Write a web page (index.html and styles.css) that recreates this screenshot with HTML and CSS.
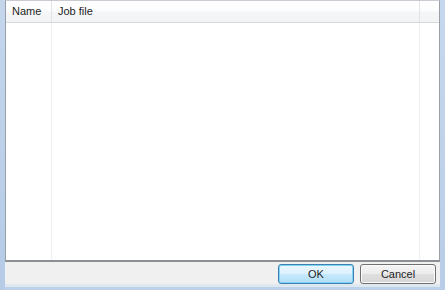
FILE: index.html
```html
<!DOCTYPE html>
<html>
<head><meta charset="utf-8"><link rel="stylesheet" href="styles.css"></head>
<body>
<div class="window">
  <div class="frame-left"></div>
  <div class="client">
    <div class="list">
      <div class="header">
        <div class="col col-name">Name</div>
        <div class="col col-job">Job file</div>
        <div class="col col-rest"></div>
      </div>
      <div class="rows">
        <div class="cell cell-name"></div>
        <div class="cell cell-job"></div>
        <div class="cell cell-rest"></div>
      </div>
    </div>
    <div class="buttons">
      <button class="btn btn-default">OK</button>
      <button class="btn">Cancel</button>
    </div>
  </div>
  <div class="frame-right"></div>
</div>
</body>
</html>
```
FILE: styles.css
```css
html, body { margin: 0; padding: 0; }
body {
  width: 445px; height: 290px; overflow: hidden;
  font-family: "Liberation Sans", Arial, sans-serif;
  font-size: 11px; color: #1e1e1e;
  background: #bcd2ea;
}
.window { display: flex; height: 290px; }
.frame-left { width: 5px; background: linear-gradient(#c3d6ec, #b5cbe6); }
.frame-right { width: 5px; background: linear-gradient(#c6d8ee, #b8cde7); }
.client {
  flex: 1; display: flex; flex-direction: column;
  background: #f0f0f0;
  border-bottom: 3px solid #dfe7f1;
  height: 287px;
  box-sizing: border-box;
}
.list {
  border: 1px solid #9a9ea5;
  border-top-color: #c8ccd2;
  border-bottom: 2px solid #8b8f94;
  background: #fff;
  display: flex; flex-direction: column;
  box-sizing: border-box;
  height: 262px;
}
.header {
  display: flex; height: 22px; box-sizing: border-box;
  background: linear-gradient(#ffffff 0%, #fdfdfe 45%, #f5f6f8 55%, #f2f3f5 100%);
  border-bottom: 1px solid #d8d9db;
}
.col {
  box-sizing: border-box; border-right: 1px solid #e3e4e6;
  padding-left: 6px; line-height: 21px;
}
.col-name { width: 46px; }
.col-job { width: 368px; }
.col-rest { flex: 1; border-right: none; }
.rows { flex: 1; display: flex; }
.cell { box-sizing: border-box; border-right: 1px solid #f0f0f0; }
.cell-name { width: 46px; }
.cell-job { width: 368px; }
.cell-rest { flex: 1; border-right: none; }
.buttons {
  flex: 1; display: flex; justify-content: flex-end; align-items: flex-start;
  gap: 6px; padding: 2px 4px 0 0;
}
.btn {
  width: 76px; height: 20px; box-sizing: border-box;
  font-family: "Liberation Sans", Arial, sans-serif; font-size: 11px; color: #1e1e1e;
  border: 1px solid #707070; border-radius: 3px;
  background: linear-gradient(#f4f4f4 0%, #ececec 50%, #e0e0e0 51%, #d6d6d6 100%);
  box-shadow: inset 0 0 0 1px #fbfbfb;
  padding: 0;
}
.btn-default {
  border-color: #3c7fb1;
  box-shadow: inset 0 0 0 1px #7fd3f5;
  background: linear-gradient(#eaf6fd 0%, #dcf1fc 50%, #c6e9fd 51%, #b3def6 100%);
}
```
